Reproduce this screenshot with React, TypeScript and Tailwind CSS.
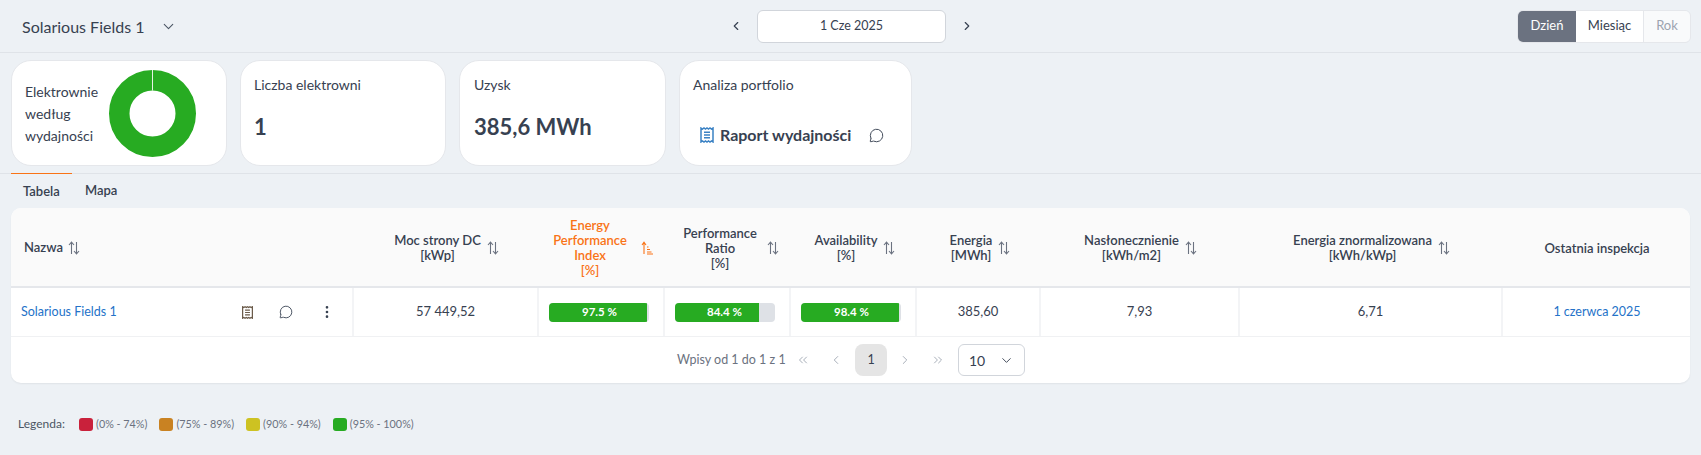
import { FC } from 'react';
import { ChevronDown, ChevronLeft, ChevronRight, ChevronsLeft, ChevronsRight, MessageCircle, MoreVertical } from 'lucide-react';

const SortIcon: FC = () => (
  <svg width="12" height="14" viewBox="0 0 12 14" fill="none" stroke="#6b7280" strokeWidth="1.1" className="shrink-0">
    <path d="M3.5 13V1.5M1 4l2.5-2.8L6 4" />
    <path d="M8.5 1v11.5M6 10l2.5 2.8L11 10" />
  </svg>
);

const SortedIcon: FC = () => (
  <svg width="12" height="14" viewBox="0 0 12 14" fill="none" stroke="#f97316" strokeWidth="1.1" className="shrink-0">
    <path d="M3 13V1.5M1 4l2-2.8L5 4" />
    <path d="M6 6h1.5M6 8.5h3M6 11h4.5M6 13h6" />
  </svg>
);

const ReportIcon: FC<{ color: string; size: number }> = ({ color, size }) => (
  <svg width={size} height={size} viewBox="0 0 16 16" fill="none" stroke={color} strokeWidth="1.5">
    <path d="M2 1l1.5 1 1.5-1 1.5 1 1.5-1 1.5 1 1.5-1 1.5 1 1.5-1v14l-1.5-1-1.5 1-1.5-1-1.5 1-1.5-1-1.5 1-1.5-1-1.5 1z" />
    <path d="M5 5.2h6M5 8h6M5 10.8h6" />
  </svg>
);

const Bar: FC<{ value: string; width: string; text: string }> = ({ value, width, text }) => (
  <div className="relative h-[19px] w-[100px] overflow-hidden rounded-[4px] bg-[#dee1e6]">
    <div className={`h-full bg-[#27ab22] ${width}`} />
    <span className={`absolute inset-y-0 flex items-center text-[11.5px] font-bold text-white ${text}`}>{value}</span>
  </div>
);

const HeadCell: FC<{ lines: string[]; active?: boolean; className?: string; noSort?: boolean }> = ({
  lines,
  active,
  className = 'gap-[6px]',
  noSort,
}) => (
  <div className={`flex items-center justify-center border-b-2 border-[#e5e7eb] pt-[2px] ${className}`}>
    <div className={`text-center text-[13px] font-semibold leading-[15px] ${active ? 'text-[#f97316]' : 'text-[#374151]'}`}>
      {lines.map((l) => (
        <div key={l}>{l}</div>
      ))}
    </div>
    {noSort ? null : active ? <SortedIcon /> : <SortIcon />}
  </div>
);

const legend = [
  { color: 'bg-[#c9213b]', label: '(0% - 74%)' },
  { color: 'bg-[#c98222]', label: '(75% - 89%)' },
  { color: 'bg-[#cdc222]', label: '(90% - 94%)' },
  { color: 'bg-[#27ab22]', label: '(95% - 100%)' },
];

const Card: FC<{ className: string; children: React.ReactNode }> = ({ className, children }) => (
  <div className={`h-[106px] rounded-[20px] border border-[#e5e7eb] bg-white ${className}`}>{children}</div>
);

const cellBase = 'flex h-12 items-center justify-center border-r-[2px] border-[#f3f4f6] text-[13px] text-[#374151]';

const App: FC = () => {
  return (
    <div className="h-[455px] w-[1701px] overflow-hidden bg-[#edf1f5] font-['Lato',sans-serif] text-[#374151]">
      <header className="flex h-[53px] items-center justify-between border-b border-[#dfe3e8] pr-[10px] pl-[22px]">
        <div className="flex w-[164px] items-center gap-[16px] pt-[1px] text-[16px] text-[#374151]">
          <span className="shrink-0">Solarious Fields 1</span>
          <ChevronDown size={17} strokeWidth={1.5} className="shrink-0 text-[#4b5563]" />
        </div>
        <div className="flex items-center gap-[14px]">
          <ChevronLeft size={14} strokeWidth={2} className="text-[#374151]" />
          <div className="flex h-[33px] w-[189px] items-center justify-center rounded-[6px] border border-[#d1d5db] bg-white text-[12.5px]">1 Cze 2025</div>
          <ChevronRight size={14} strokeWidth={2} className="text-[#374151]" />
        </div>
        <div className="flex h-[33px] w-[174px] overflow-hidden rounded-[6px] border border-[#e5e7eb] text-[13px]">
          <div className="flex w-[58px] items-center justify-center bg-[#6b7280] text-white">Dzień</div>
          <div className="flex w-[68px] items-center justify-center border-r border-[#e5e7eb] bg-white">Miesiąc</div>
          <div className="flex flex-1 items-center justify-center bg-[#f9fafb] text-[#9ca3af]">Rok</div>
        </div>
      </header>

      <section className="flex gap-[13px] px-[11px] pt-[7px]">
        <Card className="flex w-[216px] items-center pl-[13px]">
          <div className="w-[85px] pt-[2px] text-[14px] leading-[22px]">
            <div>Elektrownie</div>
            <div>według</div>
            <div>wydajności</div>
          </div>
          <svg width="87" height="87" viewBox="0 0 87 87" className="-ml-[1px] shrink-0">
            <circle cx="43.5" cy="43.5" r="33.25" fill="none" stroke="#27ab22" strokeWidth="20.5" />
            <path d="M43.5 0v20.5" stroke="#e6f3e5" strokeWidth="1" />
          </svg>
        </Card>
        <Card className="flex w-[206px] flex-col pt-[14px] pl-[13px]">
          <div className="text-[14px] leading-[20px]">Liczba elektrowni</div>
          <div className="mt-[16px] text-[22px] font-bold leading-[32px]">1</div>
        </Card>
        <Card className="flex w-[207px] flex-col pt-[14px] pl-[14px]">
          <div className="text-[14px] leading-[20px]">Uzysk</div>
          <div className="mt-[16px] text-[22px] font-bold leading-[32px]">385,6 MWh</div>
        </Card>
        <Card className="flex w-[233px] flex-col pt-[14px] pl-[13px]">
          <div className="text-[14px] leading-[20px]">Analiza portfolio</div>
          <div className="mt-[28px] flex items-center pl-[6px]">
            <ReportIcon color="#3b82c4" size={16} />
            <span className="ml-[5px] text-[16px] font-bold leading-[24px]">Raport wydajności</span>
            <MessageCircle size={15} strokeWidth={1.5} className="ml-[18px] text-[#374151]" />
          </div>
        </Card>
      </section>

      <nav className="mt-[7px] border-t border-[#dfe3e8] px-[11px]">
        <div className="flex text-[13px] font-semibold text-[#374151]">
          <div className="-mt-px w-[61px] border-t border-[#f97316] pt-[9px] pl-[12px] leading-[16px]">Tabela</div>
          <div className="pt-[8px] pl-[13px] leading-[16px]">Mapa</div>
        </div>
      </nav>

      <section className="mx-[11px] mt-[9px] h-[175px] overflow-hidden rounded-[10px] bg-white shadow-[0_1px_2px_rgba(0,0,0,0.06)]">
        <div className="grid h-[80px] grid-cols-[343px_185px_126px_126px_126px_124px_199px_263px_188px] bg-[#fafafa]">
          <div className="flex items-center gap-[5px] border-b-2 border-[#e5e7eb] pt-[1px] pl-[13px] text-[13px] font-semibold text-[#374151]">
            Nazwa <SortIcon />
          </div>
          <HeadCell lines={['Moc strony DC', '[kWp]']} />
          <HeadCell lines={['Energy', 'Performance', 'Index', '[%]']} active className="gap-[14px] pl-[2px]" />
          <HeadCell lines={['Performance', 'Ratio', '[%]']} className="gap-[10px] pl-[6px]" />
          <HeadCell lines={['Availability', '[%]']} className="gap-[6px] pl-[2px]" />
          <HeadCell lines={['Energia', '[MWh]']} className="gap-[6px] pl-[2px]" />
          <HeadCell lines={['Nasłonecznienie', '[kWh/m2]']} />
          <HeadCell lines={['Energia znormalizowana', '[kWh/kWp]']} />
          <HeadCell lines={['Ostatnia inspekcja']} noSort />
        </div>
        <div className="grid grid-cols-[343px_185px_126px_126px_126px_124px_199px_263px_188px] border-b border-[#f0f1f3]">
          <div className="flex h-12 items-center border-r-[2px] border-[#f3f4f6] pl-[10px] text-[12.5px] text-[#2472c8]">
            <span className="w-[220px]">Solarious Fields 1</span>
            <ReportIcon color="#6b5b4a" size={13} />
            <MessageCircle size={14} strokeWidth={1.5} className="ml-[25px] text-[#374151]" />
            <MoreVertical size={16} strokeWidth={2} className="ml-[26px] text-[#374151]" />
          </div>
          <div className={cellBase}>57 449,52</div>
          <div className={`${cellBase} pr-[4px]`}><Bar value="97.5 %" width="w-[97.5%]" text="left-[33px]" /></div>
          <div className={`${cellBase} pr-[4px]`}><Bar value="84.4 %" width="w-[84.4%]" text="left-[32px]" /></div>
          <div className={`${cellBase} pr-[4px]`}><Bar value="98.4 %" width="w-[98.4%]" text="left-[33px]" /></div>
          <div className={cellBase}>385,60</div>
          <div className={cellBase}>7,93</div>
          <div className={cellBase}>6,71</div>
          <div className="flex h-12 items-center justify-center text-[12.5px] text-[#2472c8]">1 czerwca 2025</div>
        </div>
        <div className="flex h-[46px] items-center pl-[666px] text-[12.5px] text-[#6b7280]">
          <span className="w-[119px]">Wpisy od 1 do 1 z 1</span>
          <ChevronsLeft size={14} strokeWidth={1.5} className="text-[#9ca3af]" />
          <ChevronLeft size={14} strokeWidth={1.5} className="ml-[19px] text-[#9ca3af]" />
          <div className="ml-[12px] flex size-8 items-center justify-center rounded-[8px] bg-[#e5e5e5] text-[#374151]">1</div>
          <ChevronRight size={14} strokeWidth={1.5} className="ml-[11px] text-[#9ca3af]" />
          <ChevronsRight size={14} strokeWidth={1.5} className="ml-[19px] text-[#9ca3af]" />
          <div className="ml-[13px] flex h-8 w-[67px] items-center justify-between rounded-[6px] border border-[#d1d5db] px-[10px] text-[14px] text-[#374151]">
            10
            <ChevronDown size={15} strokeWidth={1.5} />
          </div>
        </div>
      </section>

      <footer className="mt-[32px] flex items-center pl-[18px] text-[12px] text-[#4b5563]">
        <span className="w-[61px]">Legenda:</span>
        {legend.map((item) => (
          <div key={item.label} className="mr-[12px] flex items-center gap-[3px] text-[10.8px] text-[#6b7280]">
            <span className={`h-[13px] w-[14px] rounded-[3px] ${item.color}`} />
            {item.label}
          </div>
        ))}
      </footer>
    </div>
  );
};

export default App;
